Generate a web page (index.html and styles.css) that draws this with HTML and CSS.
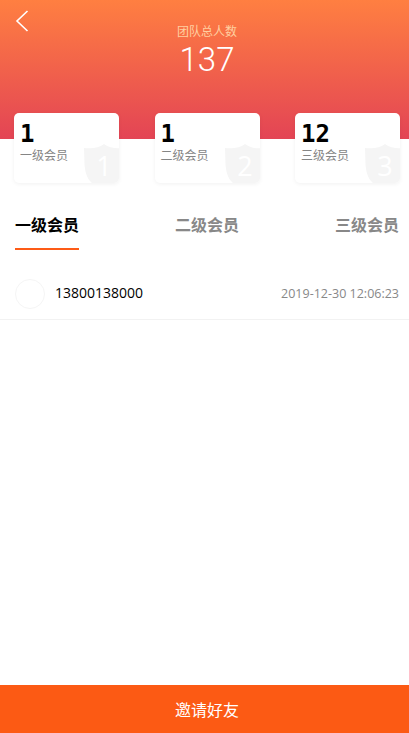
FILE: index.html
```html
<!DOCTYPE html>
<html>
<head>
<meta charset="utf-8">
<title>团队</title>
<link rel="stylesheet" href="styles.css">
</head>
<body>
<div class="page">
  <div class="head">
    <a class="back"><svg width="14" height="22" viewBox="0 0 14 22"><path d="M12.500 1 L2 11 L12.500 21" fill="none" stroke="#fff" stroke-width="1.6"/></svg></a>
    <p class="head-label">团队总人数</p>
    <p class="head-num">137</p>
  </div>

  <div class="cards">
    <div class="card">
      <b class="card-num">1</b>
      <span class="card-label">一级会员</span>
      <svg class="shield" width="40" height="39" viewBox="0 0 40 39"><path d="M0 4 C8 5 15 4 20 0 C25 4 32 5 40 4 L40 28 C39 33 36 37 31 39 L8 39 C3 35 1 28 0.500 20 Z" fill="#f5f5f5"/><text x="20" y="32" class="shield-num">1</text></svg>
    </div>
    <div class="card">
      <b class="card-num">1</b>
      <span class="card-label">二级会员</span>
      <svg class="shield" width="40" height="39" viewBox="0 0 40 39"><path d="M0 4 C8 5 15 4 20 0 C25 4 32 5 40 4 L40 28 C39 33 36 37 31 39 L8 39 C3 35 1 28 0.500 20 Z" fill="#f5f5f5"/><text x="20" y="32" class="shield-num">2</text></svg>
    </div>
    <div class="card">
      <b class="card-num">12</b>
      <span class="card-label">三级会员</span>
      <svg class="shield" width="40" height="39" viewBox="0 0 40 39"><path d="M0 4 C8 5 15 4 20 0 C25 4 32 5 40 4 L40 28 C39 33 36 37 31 39 L8 39 C3 35 1 28 0.500 20 Z" fill="#f5f5f5"/><text x="20" y="32" class="shield-num">3</text></svg>
    </div>
  </div>

  <div class="tabs">
    <span class="tab on">一级会员</span>
    <span class="tab">二级会员</span>
    <span class="tab">三级会员</span>
  </div>

  <div class="list">
    <div class="row">
      <span class="avatar"></span>
      <span class="phone">13800138000</span>
      <span class="time">2019-12-30 12:06:23</span>
    </div>
  </div>

  <div class="invite">邀请好友</div>
</div>
</body>
</html>
```

FILE: styles.css
```css
* { box-sizing: border-box; }
html, body { margin: 0; padding: 0; background: #fff; }
body { font-family: "Noto Sans CJK SC", "DejaVu Sans", sans-serif; }
p { margin: 0; }

.page { width: 409px; height: 733px; display: flex; flex-direction: column; overflow: hidden; }

.head { position: relative; height: 139px; padding: 23px 0 0 5px; text-align: center; color: #fff; background: linear-gradient(180deg, #ff7f41, #e34455); flex: none; }
.back { position: absolute; left: 15px; top: 10px; }
.head-label { font-size: 12px; line-height: 16px; color: #ffcfa0; }
.head-num { font-size: 33px; line-height: 42px; font-family: "Roboto", sans-serif; font-weight: 300; }

.cards { display: flex; justify-content: space-between; margin: -26px 9px 0 14px; flex: none; }
.card { position: relative; width: 105px; height: 70px; padding: 9px 0 0 6px; background: #fff; border-radius: 5px; box-shadow: 0 1px 4px rgba(0,0,0,.06); overflow: hidden; }
.card-num { display: block; font-family: "DejaVu Sans Mono", monospace; font-size: 24px; line-height: 25px; color: #000; }
.card-label { display: block; font-size: 12px; line-height: 16px; color: #858585; }
.shield { position: absolute; left: 70px; bottom: 0; }
.shield-num { font-family: "Open Sans", sans-serif; font-size: 27px; fill: #fff; text-anchor: middle; }

.tabs { display: flex; justify-content: space-between; margin: 23px 10px 0 15px; height: 44px; flex: none; }
.tab { width: 64px; height: 44px; font-size: 16px; line-height: 36px; font-weight: bold; color: #888; white-space: nowrap; }
.tab.on { color: #000; border-bottom: 2px solid #fd5b17; }

.list { flex: 1; padding-top: 18px; }
.row { display: flex; align-items: center; height: 52px; padding: 0 10px 0 15px; border-bottom: 1px solid #f2f2f2; }
.avatar { width: 30px; height: 30px; border: 1px solid #f5f5f5; border-radius: 50%; margin-right: 10px; }
.phone { font-size: 14px; line-height: 16px; margin-bottom: 2px; color: #000; font-family: "Open Sans", sans-serif; }
.time { margin-left: auto; font-size: 12.500px; line-height: 16px; color: #888; font-family: "Open Sans", sans-serif; }

.invite { height: 48px; padding-left: 5px; line-height: 48px; text-align: center; font-size: 16px; color: #fff; background: #fc5a14; flex: none; }
```
